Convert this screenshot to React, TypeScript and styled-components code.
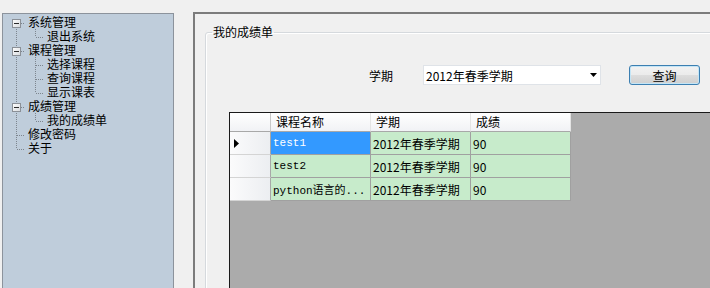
import React from "react";
import styled, { createGlobalStyle } from "styled-components";

const GlobalStyle = createGlobalStyle`
    html, body {
        margin: 0;
        padding: 0;
        background: #f0f0f0;
        overflow: hidden;
    }
    body {
        font-family: "Noto Sans CJK SC", "DejaVu Sans", sans-serif;
        font-size: 12px;
        color: #000;
    }
`;

const Page = styled.div`
    display: flex;
    align-items: flex-start;
    width: 710px;
    height: 288px;
    overflow: hidden;
    padding: 12px 0 0 2px;
    box-sizing: border-box;
`;

const TreePanel = styled.div`
    flex: none;
    margin-top: 1px;
    width: 172px;
    height: 280px;
    box-sizing: border-box;
    border: 1px solid #8c939c;
    border-bottom: none;
    background: #bfcddb;
    padding: 1px 0 0 3px;
`;

const TreeRow = styled.div`
    display: flex;
    align-items: center;
    height: 14px;
    line-height: 14px;
    white-space: nowrap;
`;

const TreeLabel = styled.span`
    margin-left: 3px;
    font-size: 12px;
    line-height: 14px;
`;

const MainPanel = styled.div`
    flex: none;
    margin-left: 19px;
    width: 540px;
    height: 290px;
    box-sizing: border-box;
    border-top: 2px solid #7c7c7c;
    border-left: 2px solid #7c7c7c;
    padding: 11px 0 0 10px;
`;

const GroupBox = styled.fieldset`
    margin: 0;
    height: 300px;
    border: 1px solid #d5d9dd;
    border-radius: 3px;
    box-shadow: inset 1px 1px 0 #ffffff;
    padding: 26px 0 0 0;
    box-sizing: border-box;
`;

const Legend = styled.legend`
    margin-left: 6px;
    padding: 0 1px;
    line-height: 14px;
    font-size: 12px;
`;

const FilterRow = styled.div`
    display: flex;
    align-items: center;
    height: 20px;
    padding-left: 163px;
`;

const FilterLabel = styled.span`
    margin-right: 30px;
`;

const Combo = styled.div`
    display: flex;
    align-items: center;
    justify-content: space-between;
    width: 178px;
    height: 20px;
    box-sizing: border-box;
    border: 1px solid #dfe3e8;
    background: #fff;
    padding: 0 3px 0 2px;
`;

const Button = styled.div`
    margin-left: 28px;
    width: 71px;
    height: 20px;
    box-sizing: border-box;
    border: 1px solid #3c7fb1;
    border-radius: 3px;
    box-shadow: inset 0 0 0 1px #c4e5f6;
    background: linear-gradient(#f2f2f2 0%, #ebebeb 50%, #dddddd 51%, #cfcfcf 100%);
    display: flex;
    align-items: center;
    justify-content: center;
`;

const GridView = styled.div`
    margin: 27px 0 0 23px;
    height: 200px;
    border-top: 1px solid #1a1a1a;
    border-left: 1px solid #1a1a1a;
    background: #ababab;
`;

const GridTable = styled.div`
    display: grid;
    grid-template-columns: 41px 100px 100px 100px;
    grid-template-rows: 19px 23px 23px 23px;
    width: 341px;
`;

const HeaderCell = styled.div<{ corner?: boolean }>`
    box-sizing: border-box;
    background: linear-gradient(#ffffff, #f1f2f5);
    border-right: 1px solid ${(p) => (p.corner ? "#c8c8c8" : "#e4e4e4")};
    border-bottom: 1px solid #a8a8a8;
    padding-left: 5px;
    line-height: 18px;
    white-space: nowrap;
`;

const RowHeader = styled.div`
    box-sizing: border-box;
    background: linear-gradient(90deg, #fbfbfc, #eceef1);
    border-right: 1px solid #a8a8a8;
    border-bottom: 1px solid #d4d4d4;
    display: flex;
    align-items: center;
    padding-left: 4px;
`;

const Cell = styled.div<{ selected?: boolean; mono?: boolean }>`
    box-sizing: border-box;
    background: ${(p) => (p.selected ? "#3399ff" : "#c7ebcb")};
    color: ${(p) => (p.selected ? "#fff" : "#000")};
    border-right: 1px solid #a0a0a0;
    border-bottom: 1px solid #a0a0a0;
    padding-left: 2px;
    display: flex;
    align-items: center;
    white-space: nowrap;
    overflow: hidden;
    font-family: ${(p) =>
        p.mono ? '"Liberation Mono", "Noto Sans CJK SC", monospace' : '"Noto Sans CJK SC", sans-serif'};
    font-size: ${(p) => (p.mono ? "11px" : "12px")};
`;

type Glyph = "firstBox" | "teeBox" | "tee" | "ell" | "line";

const dot = "#7d858e";

const TreeGlyph = ({ kind }: { kind: Glyph }) => {
    const hasBox = kind === "firstBox" || kind === "teeBox";
    const hasH = kind !== "line";
    const vTop = kind === "firstBox" ? 8 : 0;
    const vBottom = kind === "ell" ? 8 : 14;
    return (
        <svg width="19" height="14" viewBox="0 0 19 14" shapeRendering="crispEdges" style={{ flex: "none" }}>
            <line x1="10.5" y1={vTop} x2="10.5" y2={vBottom} stroke={dot} strokeDasharray="1 1" />
            {hasH && <line x1="11" y1="8.5" x2="19" y2="8.5" stroke={dot} strokeDasharray="1 1" />}
            {hasBox && (
                <>
                    <defs>
                        <linearGradient id="bx" x1="0" y1="0" x2="1" y2="1">
                            <stop offset="0" stopColor="#ffffff" />
                            <stop offset="1" stopColor="#d6d9dd" />
                        </linearGradient>
                    </defs>
                    <rect x="6.5" y="4.5" width="8" height="8" fill="url(#bx)" stroke="#8b9097" />
                    <rect x="8" y="8" width="5" height="1" fill="#2b2b2b" />
                </>
            )}
        </svg>
    );
};

const treeItems: { glyphs: Glyph[]; label: string }[] = [
    { glyphs: ["firstBox"], label: "系统管理" },
    { glyphs: ["line", "ell"], label: "退出系统" },
    { glyphs: ["teeBox"], label: "课程管理" },
    { glyphs: ["line", "tee"], label: "选择课程" },
    { glyphs: ["line", "tee"], label: "查询课程" },
    { glyphs: ["line", "ell"], label: "显示课表" },
    { glyphs: ["teeBox"], label: "成绩管理" },
    { glyphs: ["line", "ell"], label: "我的成绩单" },
    { glyphs: ["tee"], label: "修改密码" },
    { glyphs: ["ell"], label: "关于" },
];

const grades = [
    { name: "test1", term: "2012年春季学期", score: "90" },
    { name: "test2", term: "2012年春季学期", score: "90" },
    { name: "python语言的...", term: "2012年春季学期", score: "90" },
];

const App = () => {
    return (
        <>
            <GlobalStyle />
            <Page>
                <TreePanel>
                    {treeItems.map((item) => (
                        <TreeRow key={item.label}>
                            {item.glyphs.map((g, i) => (
                                <TreeGlyph key={i} kind={g} />
                            ))}
                            <TreeLabel>{item.label}</TreeLabel>
                        </TreeRow>
                    ))}
                </TreePanel>
                <MainPanel>
                    <GroupBox>
                        <Legend>我的成绩单</Legend>
                        <FilterRow>
                            <FilterLabel>学期</FilterLabel>
                            <Combo>
                                <span>2012年春季学期</span>
                                <svg width="7" height="4" viewBox="0 0 7 4">
                                    <polygon points="0,0 7,0 3.5,4" fill="#000" />
                                </svg>
                            </Combo>
                            <Button>查询</Button>
                        </FilterRow>
                        <GridView>
                            <GridTable>
                                <HeaderCell corner />
                                <HeaderCell>课程名称</HeaderCell>
                                <HeaderCell>学期</HeaderCell>
                                <HeaderCell>成绩</HeaderCell>
                                {grades.map((row, i) => (
                                    <React.Fragment key={i}>
                                        <RowHeader>
                                            {i === 0 && (
                                                <svg width="5" height="9" viewBox="0 0 5 9">
                                                    <polygon points="0,0 5,4.5 0,9" fill="#000" />
                                                </svg>
                                            )}
                                        </RowHeader>
                                        <Cell mono selected={i === 0}>{row.name}</Cell>
                                        <Cell>{row.term}</Cell>
                                        <Cell>{row.score}</Cell>
                                    </React.Fragment>
                                ))}
                            </GridTable>
                        </GridView>
                    </GroupBox>
                </MainPanel>
            </Page>
        </>
    );
};

export default App;
